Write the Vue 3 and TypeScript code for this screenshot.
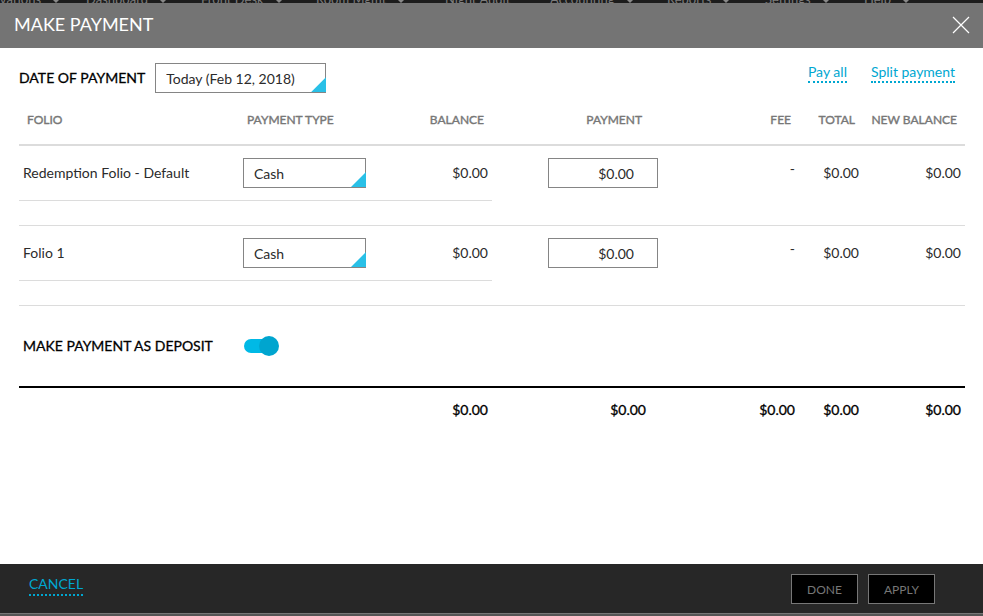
<script setup lang="ts">
import { ref } from 'vue'

interface NavItem { label: string; menu: boolean; width: number }
interface FolioRow { id: number; name: string; type: string; balance: string; payment: string; fee: string; total: string; newBalance: string }

const nav: NavItem[] = [
  { label: 'Reservations', menu: true, width: 118 },
  { label: 'Dashboard', menu: true, width: 115 },
  { label: 'Front Desk', menu: true, width: 115 },
  { label: 'Room Mgmt', menu: true, width: 129 },
  { label: 'Night Audit', menu: false, width: 105 },
  { label: 'Accounting', menu: true, width: 117 },
  { label: 'Reports', menu: true, width: 98 },
  { label: 'Settings', menu: true, width: 99 },
  { label: 'Help', menu: true, width: 60 },
]
const date = ref('Today (Feb 12, 2018)')
const deposit = ref(true)
const rows = ref<FolioRow[]>([
  { id: 1, name: 'Redemption Folio - Default', type: 'Cash', balance: '$0.00', payment: '$0.00', fee: '-', total: '$0.00', newBalance: '$0.00' },
  { id: 2, name: 'Folio 1', type: 'Cash', balance: '$0.00', payment: '$0.00', fee: '-', total: '$0.00', newBalance: '$0.00' },
])
</script>

<template>
  <div class="page">
    <nav class="topnav" aria-label="Main">
      <a v-for="n in nav" :key="n.label" href="#" class="nav-item" :style="{ width: n.width + 'px' }">
        <span>{{ n.label }}</span><i v-if="n.menu" class="caret"></i>
      </a>
    </nav>
    <header class="title-bar">
      <h1>MAKE PAYMENT</h1>
      <button class="close" type="button" aria-label="Close">
        <svg viewBox="0 0 18 18" width="18" height="18"><path d="M1 1L17 17M17 1L1 17" stroke="#fff" stroke-width="1.2" fill="none" /></svg>
      </button>
    </header>
    <main class="content">
      <div class="toolbar">
        <label class="strong" for="date">DATE OF PAYMENT</label>
        <span class="picker date-picker">
          <select id="date" v-model="date"><option>Today (Feb 12, 2018)</option></select>
        </span>
        <div class="actions">
          <a href="#" class="link">Pay all</a>
          <a href="#" class="link">Split payment</a>
        </div>
      </div>
      <table>
        <colgroup>
          <col class="c-folio"><col class="c-type"><col class="c-balance"><col class="c-payment"><col class="c-fee"><col class="c-total"><col class="c-new">
        </colgroup>
        <thead>
          <tr>
            <th>FOLIO</th><th>PAYMENT TYPE</th><th class="num">BALANCE</th><th class="num pay">PAYMENT</th><th class="num">FEE</th><th class="num">TOTAL</th><th class="num">NEW BALANCE</th>
          </tr>
        </thead>
        <tbody>
          <template v-for="r in rows" :key="r.id">
            <tr class="entry">
              <td class="ruled">{{ r.name }}</td>
              <td class="ruled">
                <span class="picker type-picker">
                  <select v-model="r.type" :aria-label="'Payment type for ' + r.name"><option>Cash</option></select>
                </span>
              </td>
              <td class="num ruled">{{ r.balance }}</td>
              <td class="num"><input v-model="r.payment" class="amount" type="text" :aria-label="'Payment for ' + r.name"></td>
              <td class="num fee">{{ r.fee }}</td>
              <td class="num">{{ r.total }}</td>
              <td class="num">{{ r.newBalance }}</td>
            </tr>
            <tr class="spacer"><td colspan="7"></td></tr>
          </template>
          <tr class="deposit">
            <td class="strong"><label for="deposit">MAKE PAYMENT AS DEPOSIT</label></td>
            <td colspan="6"><input id="deposit" v-model="deposit" class="switch" type="checkbox"></td>
          </tr>
        </tbody>
        <tfoot>
          <tr>
            <td colspan="2"></td><td class="num">$0.00</td><td class="num pay">$0.00</td><td class="num">$0.00</td><td class="num">$0.00</td><td class="num">$0.00</td>
          </tr>
        </tfoot>
      </table>
    </main>
    <footer class="footer">
      <a href="#" class="link cancel">CANCEL</a>
      <div class="buttons">
        <button type="button">DONE</button>
        <button type="button">APPLY</button>
      </div>
    </footer>
    <div class="under"></div>
  </div>
</template>

<style>
body { margin: 0; background: #fff; }
</style>

<style scoped>
* { box-sizing: border-box; }
.page { display: flex; flex-direction: column; min-height: 100vh; font-family: Lato, "Liberation Sans", sans-serif; font-size: 14px; font-weight: 400; line-height: 20px; color: #2b2b2b; font-variant-ligatures: common-ligatures discretionary-ligatures; }
.topnav { display: flex; align-items: flex-end; height: 3px; overflow: hidden; background: #1c1c1c; }
.nav-item { display: flex; flex: none; align-items: center; gap: 12px; height: 14px; margin-bottom: -3px; font-size: 13px; line-height: 14px; color: #7d7d7d; text-decoration: none; white-space: nowrap; }
.nav-item:first-child { margin-left: -32px; }
.caret { margin-top: 5px; border: 3px solid transparent; border-top-color: #888; border-bottom: 0; }
.title-bar { display: flex; justify-content: space-between; align-items: center; height: 45px; padding: 0 13px 2px 14px; background: #747474; color: #fff; }
h1 { margin: 0; padding-bottom: 2px; font-size: 18px; font-weight: 400; line-height: 24px; }
.close { display: flex; padding: 0; border: 0; background: none; }
.content { flex: 1; padding: 15px 18px 0 19px; }
.toolbar { display: flex; align-items: center; }
.strong { color: #000; -webkit-text-stroke: 0.3px #000; }
.picker { position: relative; display: block; height: 30px; }
.picker::after { content: ""; position: absolute; right: 0; bottom: 1px; width: 15px; height: 15px; background: #29c0e7; clip-path: polygon(100% 0, 100% 100%, 0 100%); pointer-events: none; }
.picker select { appearance: none; display: block; width: 100%; height: 30px; padding: 1px 10px 0; border: 1px solid #858585; border-radius: 0; background: #fff; color: #2b2b2b; font: inherit; }
.date-picker { width: 171px; margin-left: 10px; }
.type-picker { width: 123px; }
.actions { display: flex; gap: 24px; margin-left: auto; padding-right: 10px; align-self: flex-start; }
.link { color: #00a7d1; text-decoration: none; border-bottom: 2px dotted #00a7d1; line-height: 18px; }
table { width: 100%; table-layout: fixed; border-collapse: separate; border-spacing: 0; }
.c-folio { width: 220px; }
.c-balance { width: 130px; }
.c-payment { width: 170px; }
.c-fee { width: 137px; }
.c-total { width: 64px; }
.c-new { width: 102px; }
td, th { padding: 0 4px; text-align: left; }
th { height: 53px; padding: 2px 8px 0; border-bottom: 2px solid #dcdcdc; color: #777; font-size: 12px; font-weight: 400; -webkit-text-stroke: 0.4px #777; white-space: nowrap; }
td.num, th.num { text-align: right; }
th.pay { padding-right: 20px; }
.entry td { height: 55px; border-bottom: 1px solid transparent; }
.entry td.ruled { border-bottom-color: #dcdcdc; }
.entry td.fee { padding-bottom: 8px; }
.spacer td { height: 25px; border-bottom: 1px solid #dcdcdc; }
.amount { display: block; width: 110px; height: 30px; margin-left: auto; padding: 1px 23px 0; border: 1px solid #858585; border-radius: 0; font: inherit; color: #2b2b2b; text-align: right; }
.deposit td { height: 80px; white-space: nowrap; }
.switch { appearance: none; position: relative; display: block; width: 35px; height: 20px; margin: 0 0 0 1px; }
.switch::before { content: ""; position: absolute; left: 0; top: 3px; width: 32px; height: 14px; border-radius: 7px; background: #00b9e6; }
.switch::after { content: ""; position: absolute; left: 0; top: 0; width: 20px; height: 20px; border-radius: 50%; background: #00a5cf; }
.switch:checked::after { left: 15px; }
tfoot td { height: 48px; padding-bottom: 2px; border-top: 2px solid #000; color: #000; -webkit-text-stroke: 0.3px #000; }
tfoot .pay { padding-right: 16px; }
.footer { display: flex; justify-content: space-between; height: 49px; padding: 10px 48px 0 29px; background: #272727; }
.cancel { align-self: flex-start; line-height: 20px; }
.buttons { display: flex; gap: 10px; }
.buttons button { width: 67px; height: 30px; padding: 0; border: 1px solid #777; background: #000; color: #777; font: 12px Lato, "Liberation Sans", sans-serif; }
.under { height: 3px; background: #555; border-top: 1px solid #777; }
</style>
